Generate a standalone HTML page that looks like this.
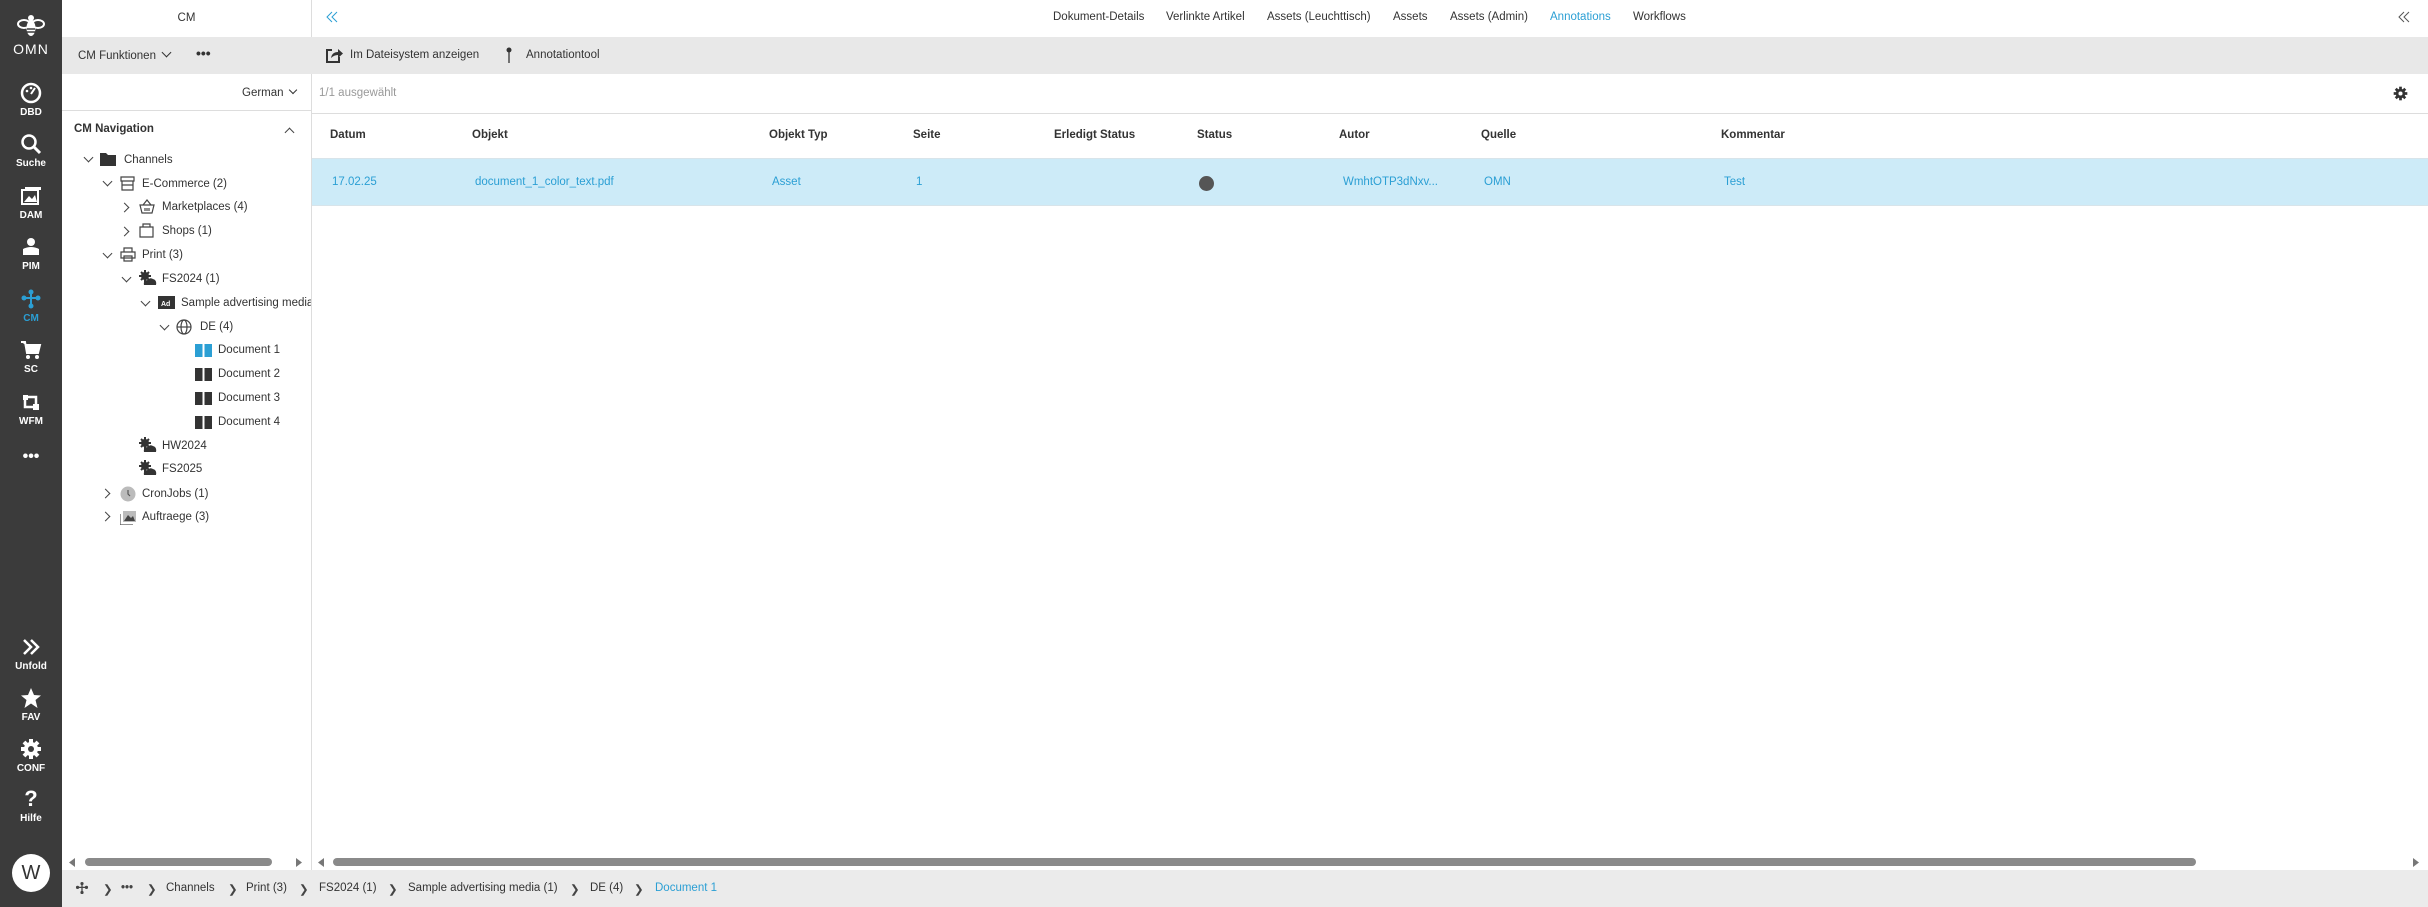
<!DOCTYPE html>
<html><head><meta charset="utf-8"><style>
*{box-sizing:border-box;margin:0;padding:0}
body{width:2428px;height:907px;overflow:hidden;font-family:"Liberation Sans",Arial,sans-serif;font-size:11.5px;color:#333;background:#fff;position:relative}
.a{position:absolute;white-space:nowrap}
.sb{position:absolute;left:0;top:0;width:62px;height:907px;background:#3b3b3b}
.si{position:absolute;left:0;width:62px;text-align:center;color:#fff;font-size:10px;font-weight:bold}
.si svg{display:block;margin:0 auto 3px}
.blue{color:#2b9fd4}
.tr{position:absolute;height:20px;line-height:20px;white-space:nowrap;font-size:11.5px;color:#333}
.chev{position:absolute;width:7px;height:7px;border-right:1.5px solid #444;border-bottom:1.5px solid #444}
.down{transform:rotate(45deg)}
.right{transform:rotate(-45deg)}
</style></head><body>
<div class="sb"></div>
<div class="si" style="top:14px"><svg width="28" height="24" viewBox="0 0 28 24"><ellipse cx="7" cy="10" rx="6" ry="4" fill="none" stroke="#fff" stroke-width="2"/><ellipse cx="21" cy="10" rx="6" ry="4" fill="none" stroke="#fff" stroke-width="2"/><ellipse cx="14" cy="14" rx="4.5" ry="8" fill="#fff"/><circle cx="14" cy="4" r="3" fill="#fff"/><line x1="10" y1="15" x2="18" y2="15" stroke="#3b3b3b" stroke-width="1.5"/><line x1="10" y1="18" x2="18" y2="18" stroke="#3b3b3b" stroke-width="1.5"/></svg><span style="font-size:14px;font-weight:normal;letter-spacing:1px">OMN</span></div>
<div class="si" style="top:82px"><svg width="22" height="22" viewBox="0 0 22 22"><circle cx="11" cy="11" r="9" fill="none" stroke="#fff" stroke-width="2.5"/><line x1="11" y1="12" x2="15" y2="6" stroke="#fff" stroke-width="2"/><circle cx="7" cy="9" r="1.3" fill="#fff"/><circle cx="11" cy="6" r="1.3" fill="#fff"/></svg>DBD</div>
<div class="si" style="top:133px"><svg width="22" height="22" viewBox="0 0 22 22"><circle cx="9" cy="9" r="6.5" fill="none" stroke="#fff" stroke-width="2.5"/><line x1="14" y1="14" x2="20" y2="20" stroke="#fff" stroke-width="3"/></svg>Suche</div>
<div class="si" style="top:185px"><svg width="22" height="22" viewBox="0 0 22 22"><rect x="2" y="5" width="16" height="14" fill="none" stroke="#fff" stroke-width="2"/><rect x="5" y="2" width="16" height="3" fill="#fff"/><path d="M4 17 L9 11 L12 14 L15 10 L17 17Z" fill="#fff"/></svg>DAM</div>
<div class="si" style="top:236px"><svg width="22" height="22" viewBox="0 0 22 22"><circle cx="11" cy="6" r="4" fill="#fff"/><path d="M3 13 Q11 9 19 13 L19 19 L3 19Z" fill="#fff"/></svg>PIM</div>
<div class="si" style="top:288px;color:#2b9fd4"><svg width="22" height="22" viewBox="0 0 22 22"><circle cx="11" cy="4" r="2.5" fill="#2b9fd4"/><circle cx="4" cy="10" r="2.5" fill="#2b9fd4"/><circle cx="18" cy="10" r="2.5" fill="#2b9fd4"/><circle cx="11" cy="18" r="2.5" fill="#2b9fd4"/><path d="M11 4V18M4 10H18" stroke="#2b9fd4" stroke-width="2"/></svg>CM</div>
<div class="si" style="top:339px"><svg width="22" height="22" viewBox="0 0 22 22"><path d="M1 3H5L7 14H18L20 6H6" fill="#fff" stroke="#fff" stroke-width="2"/><circle cx="8" cy="18" r="2" fill="#fff"/><circle cx="17" cy="18" r="2" fill="#fff"/></svg>SC</div>
<div class="si" style="top:391px"><svg width="22" height="22" viewBox="0 0 22 22"><rect x="3" y="4" width="5" height="5" fill="#fff"/><rect x="13" y="13" width="6" height="6" fill="#fff"/><path d="M8 6H16V13M13 16H5V9" fill="none" stroke="#fff" stroke-width="2.5"/></svg>WFM</div>
<div class="si" style="top:448px;font-size:16px">&#8226;&#8226;&#8226;</div>
<div class="si" style="top:636px"><svg width="22" height="22" viewBox="0 0 22 22"><path d="M4 4L11 11L4 18M11 4L18 11L11 18" fill="none" stroke="#fff" stroke-width="2.5"/></svg>Unfold</div>
<div class="si" style="top:687px"><svg width="22" height="22" viewBox="0 0 22 22"><path d="M11 1L14 8L21 8.5L15.5 13L17.5 21L11 16.5L4.5 21L6.5 13L1 8.5L8 8Z" fill="#fff"/></svg>FAV</div>
<div class="si" style="top:738px"><svg width="22" height="22" viewBox="0 0 22 22"><circle cx="11" cy="11" r="7" fill="#fff"/><g stroke="#fff" stroke-width="4"><line x1="11" y1="1" x2="11" y2="21"/><line x1="1" y1="11" x2="21" y2="11"/><line x1="4" y1="4" x2="18" y2="18"/><line x1="18" y1="4" x2="4" y2="18"/></g><circle cx="11" cy="11" r="3" fill="#3b3b3b"/></svg>CONF</div>
<div class="si" style="top:788px"><div style="font-size:22px;line-height:22px;margin-bottom:3px">?</div>Hilfe</div>
<div class="a" style="left:12px;top:854px;width:38px;height:38px;border-radius:50%;background:#fff;color:#333;font-size:20px;text-align:center;line-height:38px">W</div>

<div class="a" style="left:311px;top:0;width:1px;height:876px;background:#ddd"></div>
<div class="a" style="left:62px;top:0;width:249px;height:37px;line-height:37px;text-align:center">CM</div>
<div class="a" style="left:62px;top:37px;width:2366px;height:37px;background:#e8e8e8"></div>
<div class="a" style="left:78px;top:49px">CM Funktionen <span style="display:inline-block;width:7px;height:7px;border-right:1.5px solid #333;border-bottom:1.5px solid #333;transform:rotate(45deg);margin:0 0 3px 4px"></span></div>
<div class="a" style="left:196px;top:45px;font-size:14px;font-weight:bold">&#8226;&#8226;&#8226;</div>
<div class="a" style="left:242px;top:87px">German <span style="display:inline-block;width:6px;height:6px;border-right:1px solid #333;border-bottom:1px solid #333;transform:rotate(45deg);margin:0 0 3px 3px"></span></div>
<div class="a" style="left:62px;top:110px;width:249px;height:1px;background:#ddd"></div>
<div class="a" style="left:74px;top:123px;font-weight:bold">CM Navigation</div>
<div class="chev" style="left:286px;top:129px;transform:rotate(-135deg)"></div>

<div class="chev down" style="left:85px;top:154px"></div>
<svg class="a" style="left:100px;top:152px" width="16" height="14"><path d="M0 1H6L8 3H16V14H0Z" fill="#333"/></svg>
<div class="tr" style="left:124px;top:150px">Channels</div>
<div class="chev down" style="left:104px;top:178px"></div>
<svg class="a" style="left:120px;top:176px" width="15" height="15"><path d="M1 1H14V5H1ZM2 5V14H13V5M2 9H13" fill="none" stroke="#444" stroke-width="1.2"/></svg>
<div class="tr" style="left:142px;top:174px">E-Commerce (2)</div>
<div class="chev right" style="left:121px;top:204px"></div>
<svg class="a" style="left:139px;top:199px" width="16" height="15"><path d="M1 6H15L13 14H3ZM4 6L8 1L12 6M6 9V12M8 9V12M10 9V12" fill="none" stroke="#444" stroke-width="1.2"/></svg>
<div class="tr" style="left:162px;top:197px">Marketplaces (4)</div>
<div class="chev right" style="left:121px;top:228px"></div>
<svg class="a" style="left:139px;top:222px" width="15" height="16"><path d="M1 5H14V15H1ZM4 5V2H11V5" fill="none" stroke="#444" stroke-width="1.2"/></svg>
<div class="tr" style="left:162px;top:221px">Shops (1)</div>
<div class="chev down" style="left:104px;top:250px"></div>
<svg class="a" style="left:120px;top:247px" width="16" height="15"><path d="M4 5V1H12V5M1 5H15V11H1ZM4 9H12V14H4Z" fill="#fff" stroke="#444" stroke-width="1.2"/></svg>
<div class="tr" style="left:142px;top:245px">Print (3)</div>
<div class="chev down" style="left:123px;top:274px"></div>
<svg class="a" style="left:139px;top:270px" width="18" height="16"><circle cx="6" cy="6" r="4" fill="#333"/><path d="M6 0V12M0 6H12M2 2L10 10M10 2L2 10" stroke="#333" stroke-width="2"/><path d="M5 15Q4 10 9 10Q11 7 14 9Q18 10 17 15Z" fill="#333"/></svg>
<div class="tr" style="left:162px;top:269px">FS2024 (1)</div>
<div class="chev down" style="left:142px;top:298px"></div>
<svg class="a" style="left:158px;top:296px" width="17" height="13"><rect width="17" height="13" fill="#333"/><text x="3" y="10" font-size="7" fill="#fff" font-family="Liberation Sans" font-weight="bold">Ad</text></svg>
<div class="tr" style="left:181px;top:293px;width:130px;overflow:hidden">Sample advertising media</div>
<div class="chev down" style="left:161px;top:322px"></div>
<svg class="a" style="left:176px;top:319px" width="16" height="16"><circle cx="8" cy="8" r="7" fill="none" stroke="#444" stroke-width="1.2"/><ellipse cx="8" cy="8" rx="3" ry="7" fill="none" stroke="#444" stroke-width="1.2"/><path d="M1 8H15" stroke="#444" stroke-width="1.2"/></svg>
<div class="tr" style="left:200px;top:317px">DE (4)</div>
<svg class="a" style="left:195px;top:344px" width="17" height="13"><path d="M0 0H7.5V13H0ZM9.5 0H17V13H9.5Z" fill="#2b9fd4"/></svg>
<div class="tr blue" style="left:218px;top:340px">Document 1</div>
<svg class="a" style="left:195px;top:368px" width="17" height="13"><path d="M0 0H7.5V13H0ZM9.5 0H17V13H9.5Z" fill="#333"/></svg>
<div class="tr" style="left:218px;top:364px">Document 2</div>
<svg class="a" style="left:195px;top:392px" width="17" height="13"><path d="M0 0H7.5V13H0ZM9.5 0H17V13H9.5Z" fill="#333"/></svg>
<div class="tr" style="left:218px;top:388px">Document 3</div>
<svg class="a" style="left:195px;top:416px" width="17" height="13"><path d="M0 0H7.5V13H0ZM9.5 0H17V13H9.5Z" fill="#333"/></svg>
<div class="tr" style="left:218px;top:412px">Document 4</div>
<svg class="a" style="left:139px;top:437px" width="18" height="16"><circle cx="6" cy="6" r="4" fill="#333"/><path d="M6 0V12M0 6H12M2 2L10 10M10 2L2 10" stroke="#333" stroke-width="2"/><path d="M5 15Q4 10 9 10Q11 7 14 9Q18 10 17 15Z" fill="#333"/></svg>
<div class="tr" style="left:162px;top:436px">HW2024</div>
<svg class="a" style="left:139px;top:460px" width="18" height="16"><circle cx="6" cy="6" r="4" fill="#333"/><path d="M6 0V12M0 6H12M2 2L10 10M10 2L2 10" stroke="#333" stroke-width="2"/><path d="M5 15Q4 10 9 10Q11 7 14 9Q18 10 17 15Z" fill="#333"/></svg>
<div class="tr" style="left:162px;top:459px">FS2025</div>
<div class="chev right" style="left:102px;top:490px"></div>
<svg class="a" style="left:120px;top:486px" width="16" height="16"><circle cx="8" cy="8" r="7.5" fill="#bbb"/><path d="M8 4V8L10 10" stroke="#555" stroke-width="1.2" fill="none"/></svg>
<div class="tr" style="left:142px;top:484px">CronJobs (1)</div>
<div class="chev right" style="left:102px;top:513px"></div>
<svg class="a" style="left:120px;top:510px" width="16" height="15"><path d="M0 4V15H13" fill="none" stroke="#555" stroke-width="1.2"/><rect x="3" y="1" width="13" height="11" fill="#bbb"/><path d="M4 11L8 5L11 8L13 6L15 11Z" fill="#444"/></svg>
<div class="tr" style="left:142px;top:507px">Auftraege (3)</div>

<svg class="a" style="left:326px;top:11px" width="12" height="12"><path d="M6 1L1 6L6 11M11 1L6 6L11 11" fill="none" stroke="#2b9fd4" stroke-width="1"/></svg>
<div class="a" style="left:1053px;top:11px">Dokument-Details</div>
<div class="a" style="left:1166px;top:11px">Verlinkte Artikel</div>
<div class="a" style="left:1267px;top:11px">Assets (Leuchttisch)</div>
<div class="a" style="left:1393px;top:11px">Assets</div>
<div class="a" style="left:1450px;top:11px">Assets (Admin)</div>
<div class="a blue" style="left:1550px;top:11px">Annotations</div>
<div class="a" style="left:1633px;top:11px">Workflows</div>
<svg class="a" style="left:2398px;top:11px" width="12" height="12"><path d="M6 1L1 6L6 11M11 1L6 6L11 11" fill="none" stroke="#555" stroke-width="1"/></svg>

<svg class="a" style="left:326px;top:47px" width="17" height="16"><path d="M6 3H1V15H13V10" fill="none" stroke="#333" stroke-width="2"/><path d="M5 11Q6 5 12 5V2L17 6.5L12 11V8Q8 8 5 11Z" fill="#333"/></svg>
<div class="a" style="left:350px;top:49px">Im Dateisystem anzeigen</div>
<svg class="a" style="left:506px;top:47px" width="6" height="16"><circle cx="3" cy="3" r="2.5" fill="#333"/><line x1="3" y1="4" x2="3" y2="16" stroke="#333" stroke-width="1.3"/></svg>
<div class="a" style="left:526px;top:49px">Annotationtool</div>

<div class="a" style="left:319px;top:87px;color:#999">1/1 ausgewählt</div>
<svg class="a" style="left:2393px;top:86px" width="15" height="15" viewBox="0 0 22 22"><circle cx="11" cy="11" r="7" fill="#333"/><g stroke="#333" stroke-width="4"><line x1="11" y1="1" x2="11" y2="21"/><line x1="1" y1="11" x2="21" y2="11"/><line x1="4" y1="4" x2="18" y2="18"/><line x1="18" y1="4" x2="4" y2="18"/></g><circle cx="11" cy="11" r="3" fill="#fff"/></svg>
<div class="a" style="left:312px;top:113px;width:2116px;height:1px;background:#ddd"></div>

<div class="a" style="left:312px;top:129px;width:2116px;font-weight:bold;color:#333">
<span class="a" style="left:18px">Datum</span><span class="a" style="left:160px">Objekt</span><span class="a" style="left:457px">Objekt Typ</span><span class="a" style="left:601px">Seite</span><span class="a" style="left:742px">Erledigt Status</span><span class="a" style="left:885px">Status</span><span class="a" style="left:1027px">Autor</span><span class="a" style="left:1169px">Quelle</span><span class="a" style="left:1409px">Kommentar</span></div>
<div class="a" style="left:312px;top:158px;width:2116px;height:48px;background:#cdebf8;border-top:1px solid #d8e4ea;border-bottom:1px solid #d8e4ea"></div>
<div class="a blue" style="left:312px;top:176px;width:2116px">
<span class="a" style="left:20px">17.02.25</span><span class="a" style="left:163px">document_1_color_text.pdf</span><span class="a" style="left:460px">Asset</span><span class="a" style="left:604px">1</span><span class="a" style="left:887px;top:0;width:15px;height:15px;border-radius:50%;background:#555"></span><span class="a" style="left:1031px">WmhtOTP3dNxv...</span><span class="a" style="left:1172px">OMN</span><span class="a" style="left:1412px">Test</span></div>

<svg class="a" style="left:69px;top:858px" width="6" height="9"><path d="M6 0V9L0 4.5Z" fill="#777"/></svg>
<div class="a" style="left:85px;top:858px;width:187px;height:8px;border-radius:4px;background:#8a8a8a"></div>
<svg class="a" style="left:296px;top:858px" width="6" height="9"><path d="M0 0V9L6 4.5Z" fill="#777"/></svg>
<svg class="a" style="left:318px;top:858px" width="6" height="9"><path d="M6 0V9L0 4.5Z" fill="#777"/></svg>
<div class="a" style="left:333px;top:858px;width:1863px;height:8px;border-radius:4px;background:#8a8a8a"></div>
<svg class="a" style="left:2413px;top:858px" width="6" height="9"><path d="M0 0V9L6 4.5Z" fill="#777"/></svg>

<div class="a" style="left:62px;top:870px;width:2366px;height:37px;background:#ebebeb"></div>
<svg class="a" style="left:75px;top:881px" width="14" height="14" viewBox="0 0 22 22"><circle cx="11" cy="4" r="2.5" fill="#444"/><circle cx="4" cy="10" r="2.5" fill="#444"/><circle cx="18" cy="10" r="2.5" fill="#444"/><circle cx="11" cy="18" r="2.5" fill="#444"/><path d="M11 4V18M4 10H18" stroke="#444" stroke-width="2"/></svg>
<div class="a" style="left:103px;top:882px;color:#444">&#10095;</div>
<div class="a" style="left:121px;top:882px;font-weight:bold;color:#444">&#8226;&#8226;&#8226;</div>
<div class="a" style="left:147px;top:882px;color:#444">&#10095;</div>
<div class="a" style="left:166px;top:882px">Channels</div>
<div class="a" style="left:228px;top:882px;color:#444">&#10095;</div>
<div class="a" style="left:246px;top:882px">Print (3)</div>
<div class="a" style="left:299px;top:882px;color:#444">&#10095;</div>
<div class="a" style="left:319px;top:882px">FS2024 (1)</div>
<div class="a" style="left:388px;top:882px;color:#444">&#10095;</div>
<div class="a" style="left:408px;top:882px">Sample advertising media (1)</div>
<div class="a" style="left:570px;top:882px;color:#444">&#10095;</div>
<div class="a" style="left:590px;top:882px">DE (4)</div>
<div class="a" style="left:634px;top:882px;color:#444">&#10095;</div>
<div class="a blue" style="left:655px;top:882px">Document 1</div>
</body></html>
